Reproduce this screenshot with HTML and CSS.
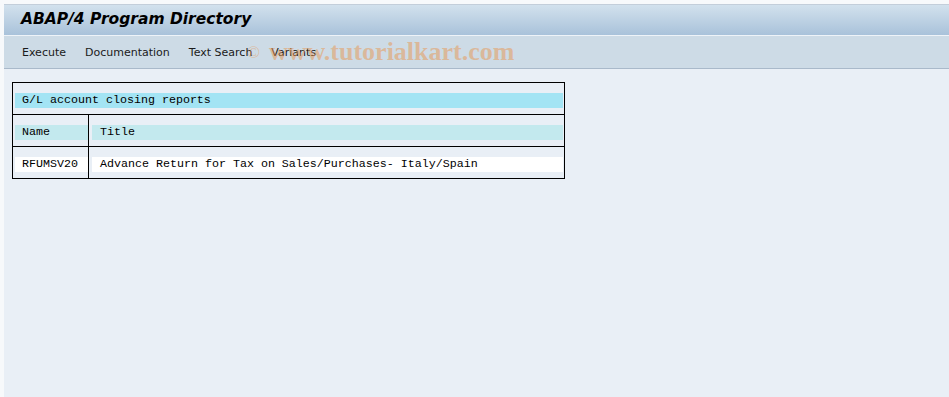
FILE: index.html
```html
<!DOCTYPE html>
<html lang="en">
<head>
<meta charset="UTF-8">
<title>ABAP/4 Program Directory</title>
<link rel="stylesheet" href="styles.css">
</head>
<body>
<div class="window">
  <div class="title-bar">ABAP/4 Program Directory</div>
  <div class="toolbar">
    <span class="tool">Execute</span>
    <span class="tool">Documentation</span>
    <span class="tool">Text Search</span>
    <span class="tool">Variants</span>
    <span class="mark"><span class="copy">&copy;</span>www.tutorialkart.com</span>
  </div>
  <div class="content">
    <div class="list">
      <div class="row">
        <div class="cell wide"><span class="band group">G/L account closing reports</span></div>
      </div>
      <div class="row">
        <div class="cell name"><span class="band head">Name</span></div>
        <div class="cell title"><span class="band head">Title</span></div>
      </div>
      <div class="row">
        <div class="cell name"><span class="band item">RFUMSV20</span></div>
        <div class="cell title"><span class="band item">Advance Return for Tax on Sales/Purchases- Italy/Spain</span></div>
      </div>
    </div>
  </div>
</div>
</body>
</html>
```

FILE: styles.css
```css
html, body {
  height: 100%;
}
body {
  margin: 0;
  background-color: #f7f9fb;
}
.window {
  margin-left: 4px;
  padding-top: 4px;
  height: calc(100% - 4px);
  display: flex;
  flex-direction: column;
}
/* Title bar */
.title-bar {
  height: 30px;
  border-top: 1px solid #c3ceda;
  border-bottom: 1px solid #eef3f8;
  background: linear-gradient(#d2e1ed, #a9c2da);
  font-family: "DejaVu Sans", sans-serif;
  font-weight: bold;
  font-style: italic;
  font-size: 15.5px;
  color: #000;
  line-height: 29px;
  padding-left: 17px;
}
/* Toolbar */
.toolbar {
  height: 32px;
  background-color: #cddbe6;
  border-bottom: 1px solid #a9b9ca;
  display: flex;
  align-items: center;
  padding-left: 18px;
  font-family: "DejaVu Sans", sans-serif;
  font-size: 11px;
  color: #1a1a1a;
  position: relative;
}
.tool {
  margin-right: 19px;
}
/* watermark over the toolbar */
.mark {
  position: absolute;
  left: 243px;
  top: 0;
  font-family: "Liberation Serif", serif;
  font-weight: bold;
  font-size: 26px;
  line-height: 32px;
  color: rgba(232, 150, 80, 0.5);
  white-space: nowrap;
}
.copy {
  font-weight: normal;
  font-size: 17px;
  margin-right: 9px;
  vertical-align: 2px;
}
/* Content */
.content {
  flex: 1;
  background-color: #e9eff6;
  padding: 13px 0 0 8px;
}
.list {
  width: 551px;
  border: 1px solid #000;
}
.row {
  display: flex;
  height: 31px;
  border-top: 1px solid #000;
}
.row:first-child {
  border-top: none;
}
.cell {
  padding-top: 10px;
  display: flex;
}
.wide {
  flex: 1;
  padding-left: 2px;
  padding-right: 1px;
}
.name {
  width: 73px;
  padding-left: 2px;
}
.title {
  flex: 1;
  border-left: 1px solid #000;
  padding-left: 3px;
  padding-right: 1px;
}
.band {
  flex: 1;
  height: 15px;
  line-height: 15px;
  font-family: "Liberation Mono", monospace;
  font-size: 11.67px;
  color: #000;
  padding-left: 7px;
  white-space: nowrap;
}
.title .band {
  padding-left: 8px;
}
.group {
  background-color: #a3e4f4;
}
.head {
  background-color: #c3e9ee;
}
.item {
  background-color: #fff;
}
```
